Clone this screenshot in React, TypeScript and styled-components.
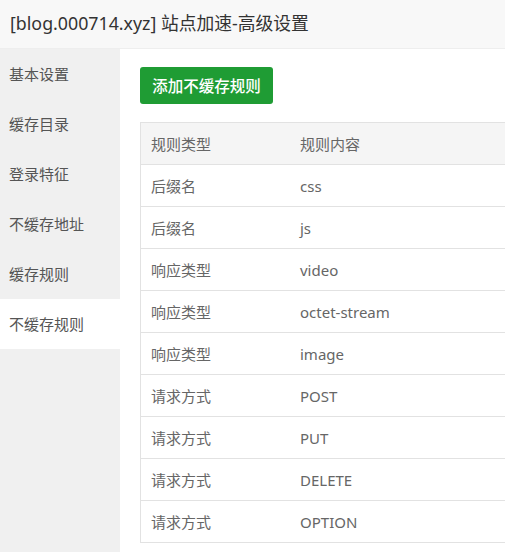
import React from 'react';
import styled, { createGlobalStyle } from 'styled-components';

const GlobalStyle = createGlobalStyle`
  html, body {
    margin: 0;
    padding: 0;
    background: #fff;
  }
  body {
    font-family: "Noto Sans", "Noto Sans CJK SC", sans-serif;
    font-size: 15px;
  }
`;

const menuItems = ['基本设置', '缓存目录', '登录特征', '不缓存地址', '缓存规则', '不缓存规则'];

const rules = [
  { type: '后缀名', content: 'css' },
  { type: '后缀名', content: 'js' },
  { type: '响应类型', content: 'video' },
  { type: '响应类型', content: 'octet-stream' },
  { type: '响应类型', content: 'image' },
  { type: '请求方式', content: 'POST' },
  { type: '请求方式', content: 'PUT' },
  { type: '请求方式', content: 'DELETE' },
  { type: '请求方式', content: 'OPTION' },
];

export default function App() {
  const active = '不缓存规则';

  return (
    <Layer>
      <GlobalStyle />
      <Title>[blog.000714.xyz] 站点加速-高级设置</Title>
      <Body>
        <Sidebar>
          {menuItems.map((item) => (
            <MenuItem key={item} $active={item === active}>
              {item}
            </MenuItem>
          ))}
        </Sidebar>
        <Content>
          <AddButton type='button'>添加不缓存规则</AddButton>
          <Table>
            <thead>
              <tr>
                <Th $first>规则类型</Th>
                <Th>规则内容</Th>
              </tr>
            </thead>
            <tbody>
              {rules.map((rule, i) => (
                <tr key={i}>
                  <Td $first>{rule.type}</Td>
                  <Td>{rule.content}</Td>
                </tr>
              ))}
            </tbody>
          </Table>
        </Content>
      </Body>
    </Layer>
  );
}

const Layer = styled.div`
  width: 505px;
  height: 552px;
  overflow: hidden;
  display: flex;
  flex-direction: column;
`;

const Title = styled.div`
  height: 48px;
  line-height: 46px;
  padding: 0 10px;
  font-size: 17.8px;
  color: #333;
  background: #f8f8f8;
  border-bottom: 1px solid #eee;
  white-space: nowrap;
`;

const Body = styled.div`
  flex: 1;
  display: flex;
  min-height: 0;
`;

const Sidebar = styled.ul`
  width: 120px;
  flex-shrink: 0;
  margin: 0;
  padding: 0;
  list-style: none;
  background: #f0f0f0;
`;

const MenuItem = styled.li<{ $active?: boolean }>`
  height: 50px;
  line-height: 50px;
  padding-left: 9px;
  color: #555;
  font-size: 15px;
  background: ${({ $active }) => ($active ? '#fff' : 'transparent')};
  cursor: pointer;
`;

const Content = styled.div`
  flex: 1;
  min-width: 0;
  padding: 18px 0 0 20px;
  display: flex;
  flex-direction: column;
  align-items: flex-start;
`;

const AddButton = styled.button`
  width: 133px;
  height: 37px;
  padding: 0;
  border: none;
  border-radius: 3px;
  background: #1f9c34;
  color: #fff;
  font-family: inherit;
  font-size: 15.5px;
  font-weight: 500;
  cursor: pointer;
`;

const Table = styled.table`
  margin-top: 18px;
  width: 400px;
  flex-shrink: 0;
  border-collapse: collapse;
  border: 1px solid #e2e2e2;
  color: #666;
  font-size: 15px;

  thead tr {
    background: #f5f5f5;
  }
  tr {
    height: 42px;
    border-bottom: 1px solid #e2e2e2;
  }
`;

const Th = styled.th<{ $first?: boolean }>`
  text-align: left;
  font-weight: normal;
  padding: 0 10px;
  width: ${({ $first }) => ($first ? '129px' : 'auto')};
`;

const Td = styled.td<{ $first?: boolean }>`
  padding: 0 10px;
  width: ${({ $first }) => ($first ? '129px' : 'auto')};
`;
